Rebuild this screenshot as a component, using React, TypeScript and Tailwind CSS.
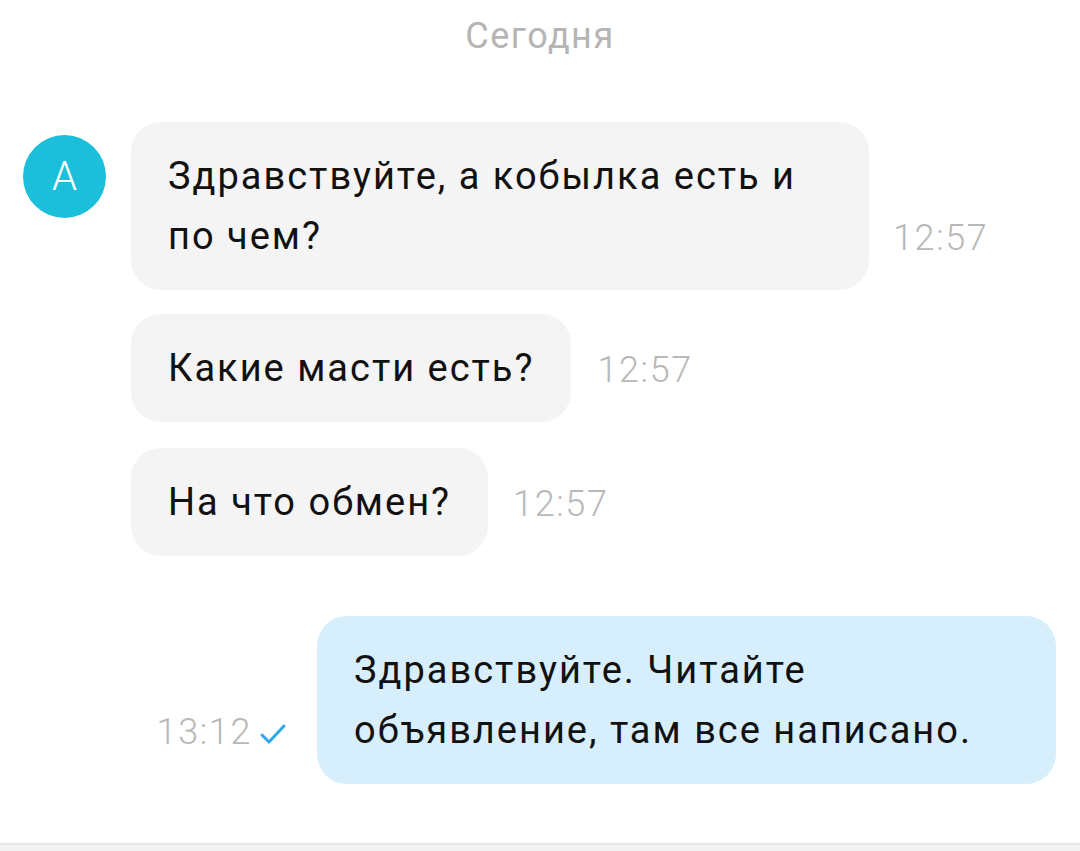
import React from "react";

function Check() {
  return (
    <svg width="30" height="24" viewBox="0 0 30 24" fill="none">
      <path d="M4 13 L11 20 L26 4" stroke="#2ea7ee" strokeWidth="3" strokeLinecap="round" strokeLinejoin="round" />
    </svg>
  );
}

export default function App() {
  return (
    <div className="w-[1080px] h-[851px] bg-white flex flex-col overflow-hidden" style={{ fontFamily: "Roboto, 'Noto Sans', sans-serif" }}>
      <div className="flex-1 flex flex-col">
        <div className="h-[72px] flex items-center justify-center text-[36px] tracking-[1.5px] text-[#b5b5b5] leading-none">Сегодня</div>
        <div className="flex flex-col pl-[23px] pr-[24px] pt-[50px]">
          <div className="flex items-start">
            <div className="w-[83px] h-[83px] rounded-full bg-[#1cbfd9] flex items-center justify-center text-white text-[40px] font-light mt-[13px] shrink-0">A</div>
            <div className="flex items-end ml-[25px]">
              <div className="bg-[#f4f4f4] rounded-[30px] px-[37px] py-[24px] w-[738px] text-[38px] tracking-[2px] leading-[60px] text-[#111]">
                Здравствуйте, а кобылка есть и по чем?
              </div>
              <div className="ml-[24px] mb-[22px] text-[36px] tracking-[1.6px] leading-[60px] font-light text-[#b8b8b8]">12:57</div>
            </div>
          </div>
          <div className="flex items-end ml-[108px] mt-[24px]">
            <div className="bg-[#f4f4f4] rounded-[30px] px-[37px] py-[24px] text-[38px] tracking-[2px] leading-[60px] text-[#111]">Какие масти есть?</div>
            <div className="ml-[26px] mb-[22px] text-[36px] tracking-[1.6px] leading-[60px] font-light text-[#b8b8b8]">12:57</div>
          </div>
          <div className="flex items-end ml-[108px] mt-[26px]">
            <div className="bg-[#f4f4f4] rounded-[30px] px-[37px] py-[24px] text-[38px] tracking-[2px] leading-[60px] text-[#111]">На что обмен?</div>
            <div className="ml-[25px] mb-[22px] text-[36px] tracking-[1.6px] leading-[60px] font-light text-[#b8b8b8]">12:57</div>
          </div>
          <div className="flex items-end justify-end mt-[60px]">
            <div className="flex items-center mb-[22px] mr-[29px] h-[60px]">
              <span className="text-[36px] tracking-[1.6px] font-light text-[#b8b8b8] leading-[60px]">13:12</span>
              <span className="ml-[6px] mt-[4px]"><Check /></span>
            </div>
            <div className="bg-[#d7effc] rounded-[30px] pl-[37px] pr-[30px] py-[24px] w-[739px] text-[38px] tracking-[2px] leading-[60px] text-[#111]">
              Здравствуйте. Читайте объявление, там все написано.
            </div>
          </div>
        </div>
      </div>
      <div className="h-[8px] border-t-2 border-[#e4e4e4] bg-[#f2f2f2]" />
    </div>
  );
}
